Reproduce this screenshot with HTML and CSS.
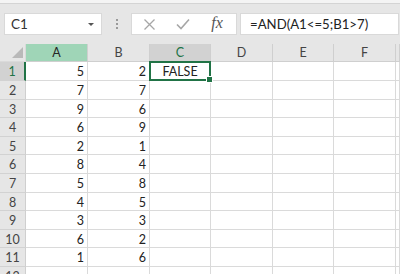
FILE: index.html
```html
<!DOCTYPE html>
<html>
<head>
<meta charset="utf-8">
<link rel="stylesheet" href="styles.css">
</head>
<body>
<div class="edge"></div>
<div class="fbar">
  <div class="namebox"><span>C1</span><span class="caret"></span></div>
  <div class="dots"><i></i><i></i><i></i></div>
  <div class="btns">
    <span class="btn"><svg width="13" height="13" viewBox="0 0 13 13"><path d="M1.5 1.5 L11.5 11.5 M11.5 1.5 L1.5 11.5" stroke="#a6a6a6" stroke-width="1.3" fill="none"/></svg></span>
    <span class="btn"><svg width="14" height="12" viewBox="0 0 14 12"><path d="M1 6.5 L5 10.5 L13 1.5" stroke="#a6a6a6" stroke-width="1.6" fill="none"/></svg></span>
    <span class="btn fx">fx</span>
  </div>
  <div class="formula">=AND(A1&lt;=5;B1&gt;7)</div>
</div>
<div class="sheet">
  <div class="corner"><span class="tri"></span></div>
  <div class="ch sel-a">A</div><div class="ch">B</div><div class="ch sel-c">C</div><div class="ch">D</div><div class="ch">E</div><div class="ch">F</div><div class="ch"></div>

  <div class="rh sel-r">1</div><div class="c n">5</div><div class="c n">2</div><div class="c t active">FALSE<span class="handle"></span></div><div class="c"></div><div class="c"></div><div class="c"></div><div class="c"></div>
  <div class="rh">2</div><div class="c n">7</div><div class="c n">7</div><div class="c"></div><div class="c"></div><div class="c"></div><div class="c"></div><div class="c"></div>
  <div class="rh">3</div><div class="c n">9</div><div class="c n">6</div><div class="c"></div><div class="c"></div><div class="c"></div><div class="c"></div><div class="c"></div>
  <div class="rh">4</div><div class="c n">6</div><div class="c n">9</div><div class="c"></div><div class="c"></div><div class="c"></div><div class="c"></div><div class="c"></div>
  <div class="rh">5</div><div class="c n">2</div><div class="c n">1</div><div class="c"></div><div class="c"></div><div class="c"></div><div class="c"></div><div class="c"></div>
  <div class="rh">6</div><div class="c n">8</div><div class="c n">4</div><div class="c"></div><div class="c"></div><div class="c"></div><div class="c"></div><div class="c"></div>
  <div class="rh">7</div><div class="c n">5</div><div class="c n">8</div><div class="c"></div><div class="c"></div><div class="c"></div><div class="c"></div><div class="c"></div>
  <div class="rh">8</div><div class="c n">4</div><div class="c n">5</div><div class="c"></div><div class="c"></div><div class="c"></div><div class="c"></div><div class="c"></div>
  <div class="rh">9</div><div class="c n">3</div><div class="c n">3</div><div class="c"></div><div class="c"></div><div class="c"></div><div class="c"></div><div class="c"></div>
  <div class="rh">10</div><div class="c n">6</div><div class="c n">2</div><div class="c"></div><div class="c"></div><div class="c"></div><div class="c"></div><div class="c"></div>
  <div class="rh">11</div><div class="c n">1</div><div class="c n">6</div><div class="c"></div><div class="c"></div><div class="c"></div><div class="c"></div><div class="c"></div>
  <div class="rh">12</div><div class="c"></div><div class="c"></div><div class="c"></div><div class="c"></div><div class="c"></div><div class="c"></div><div class="c"></div>
</div>
</body>
</html>
```

FILE: styles.css
```css
html, body {
  margin: 0;
  padding: 0;
}
body {
  width: 400px;
  height: 274px;
  overflow: hidden;
  background: #e6e6e6;
  font-family: Lato, "Open Sans", sans-serif;
  color: #222;
}
.edge {
  height: 3px;
  background: #f4f4f4;
  border-bottom: 1px solid #d4d4d4;
}
.fbar {
  display: flex;
  align-items: center;
  height: 22px;
  padding: 9px 0 9px 4px;
}
.namebox {
  width: 98px;
  height: 22px;
  box-sizing: border-box;
  background: #fff;
  border: 1px solid #d9d9d9;
  display: flex;
  align-items: center;
  justify-content: space-between;
  padding: 0 6px 0 6px;
  font-size: 13.5px;
  color: #333;
}
.caret {
  width: 0;
  height: 0;
  border-left: 3px solid transparent;
  border-right: 3px solid transparent;
  border-top: 3px solid #555;
  margin-right: 1px;
}
.dots {
  width: 29px;
  display: flex;
  flex-direction: column;
  align-items: center;
  gap: 2px;
}
.dots i {
  display: block;
  width: 2px;
  height: 2px;
  background: #9a9a9a;
}
.btns {
  width: 106px;
  height: 22px;
  box-sizing: border-box;
  background: #fff;
  border: 1px solid #d9d9d9;
  display: flex;
  align-items: center;
}
.btn {
  width: 34px;
  display: flex;
  justify-content: center;
  align-items: center;
}
.fx {
  font-family: "Liberation Serif", serif;
  font-style: italic;
  font-size: 16px;
  color: #555;
  margin-top: -2px;
}
.formula {
  flex: 1;
  height: 22px;
  box-sizing: border-box;
  margin-left: 3px;
  margin-right: 1px;
  background: #fff;
  border: 1px solid #d9d9d9;
  padding-left: 9px;
  display: flex;
  align-items: center;
  font-size: 13.2px;
  color: #222;
}
.sheet {
  display: grid;
  grid-template-columns: 26px 62px 62px 61px 62px 61px 62px 1fr;
  grid-template-rows: 18px 19px 19px 18px 19px 18px 19px 19px 18px 19px 18px 19px 19px;
  background: #fff;
}
.sheet > div {
  box-sizing: border-box;
  border-right: 1px solid #dadada;
  border-bottom: 1px solid #dadada;
  display: flex;
  align-items: center;
  font-size: 12.5px;
}
.corner {
  background: #e6e6e6;
  position: relative;
}
.tri {
  position: absolute;
  right: 2px;
  bottom: 3px;
  width: 0;
  height: 0;
  border-left: 11px solid transparent;
  border-bottom: 11px solid #b9b9b9;
}
.sheet > .ch {
  background: #e6e6e6;
  justify-content: center;
  color: #444;
  font-size: 12.5px;
  border-right-color: #cfcfcf;
  border-bottom-color: #cfcfcf;
}
.sheet > .sel-a {
  background: #9fd5b7;
  color: #262626;
}
.sheet > .sel-c {
  background: #d2d2d2;
  color: #217346;
}
.sheet > .rh {
  background: #e6e6e6;
  justify-content: center;
  color: #444;
  font-size: 12.5px;
  border-right-color: #cfcfcf;
  border-bottom-color: #d2d2d2;
  padding-top: 1px;
}
.sheet > .sel-r {
  background: #d2d2d2;
  color: #217346;
  border-right: 2px solid #217346;
}
.sheet > .n {
  justify-content: flex-end;
  padding-right: 3px;
  padding-top: 1px;
}
.sheet > .t {
  justify-content: center;
  padding-top: 1px;
}
.sheet > .active {
  position: relative;
}
.active::after {
  content: "";
  position: absolute;
  left: -1px;
  top: -1px;
  right: -1px;
  bottom: -1px;
  border: 2px solid #217346;
}
.handle {
  position: absolute;
  right: -3px;
  bottom: -3px;
  width: 5px;
  height: 5px;
  background: #217346;
  border: 1px solid #fff;
  z-index: 2;
}
```
